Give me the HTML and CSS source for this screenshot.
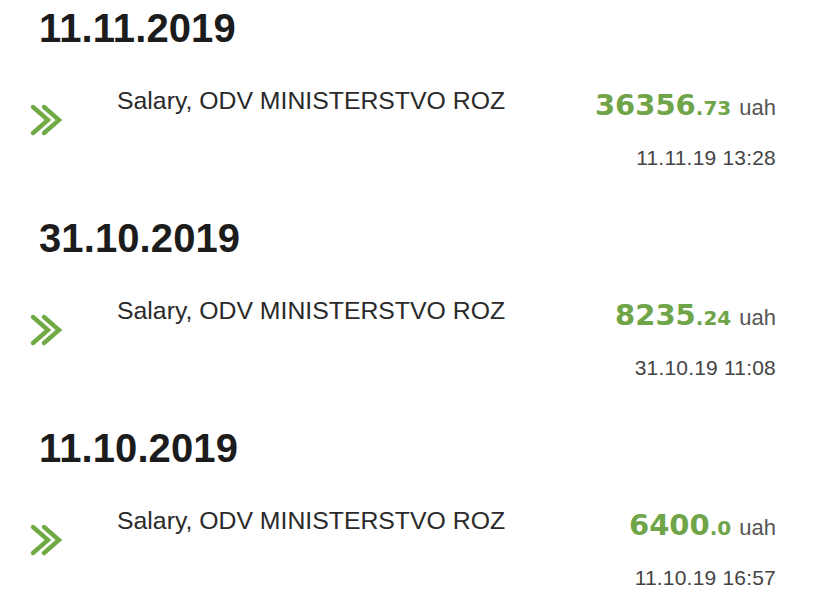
FILE: index.html
```html
<!DOCTYPE html>
<html>
<head>
<meta charset="utf-8">
<link rel="stylesheet" href="styles.css">
</head>
<body>
<div class="list">
  <section class="day">
    <h2 class="day-title">11.11.2019</h2>
    <div class="tx">
      <svg class="tx-icon" width="34" height="34" viewBox="0 0 34 34"><polyline points="4,4 19,17 4,30"/><polyline points="15,4 30,17 15,30"/></svg>
      <div class="tx-desc">Salary, ODV MINISTERSTVO ROZ</div>
      <div class="tx-side">
        <div class="tx-amount"><span class="int">36356</span><span class="frac">.73</span> <span class="cur">uah</span></div>
        <div class="tx-time">11.11.19 13:28</div>
      </div>
    </div>
  </section>
  <section class="day">
    <h2 class="day-title">31.10.2019</h2>
    <div class="tx">
      <svg class="tx-icon" width="34" height="34" viewBox="0 0 34 34"><polyline points="4,4 19,17 4,30"/><polyline points="15,4 30,17 15,30"/></svg>
      <div class="tx-desc">Salary, ODV MINISTERSTVO ROZ</div>
      <div class="tx-side">
        <div class="tx-amount"><span class="int">8235</span><span class="frac">.24</span> <span class="cur">uah</span></div>
        <div class="tx-time">31.10.19 11:08</div>
      </div>
    </div>
  </section>
  <section class="day">
    <h2 class="day-title">11.10.2019</h2>
    <div class="tx">
      <svg class="tx-icon" width="34" height="34" viewBox="0 0 34 34"><polyline points="4,4 19,17 4,30"/><polyline points="15,4 30,17 15,30"/></svg>
      <div class="tx-desc">Salary, ODV MINISTERSTVO ROZ</div>
      <div class="tx-side">
        <div class="tx-amount"><span class="int">6400</span><span class="frac">.0</span> <span class="cur">uah</span></div>
        <div class="tx-time">11.10.19 16:57</div>
      </div>
    </div>
  </section>
</div>
</body>
</html>
```
FILE: styles.css
```css
html, body {
  margin: 0;
  padding: 0;
  background: #ffffff;
}
body {
  font-family: "Liberation Sans", Arial, sans-serif;
  width: 815px;
  height: 600px;
  overflow: hidden;
}
.list {
  padding: 3px 39px 0 29px;
}
.day {
  height: 210px;
}
.day:last-child {
  height: auto;
}
.day-title {
  margin: 0 0 0 10px;
  font-size: 40px;
  line-height: 50px;
  font-weight: 700;
  color: #1c1c1c;
  letter-spacing: 0.1px;
}
.tx {
  display: flex;
  align-items: flex-start;
  margin-top: 33px;
}
.tx-icon {
  flex: none;
  margin-top: 17px;
  width: 34px;
  height: 34px;
  fill: none;
  stroke: #70aa45;
  stroke-width: 4.4;
  stroke-linecap: round;
  stroke-linejoin: miter;
}
.tx-desc {
  flex: 1;
  margin-left: 54px;
  font-size: 24.8px;
  line-height: 30px;
  color: #2a2a2a;
}
.tx-side {
  display: flex;
  flex-direction: column;
  align-items: flex-end;
}
.tx-amount {
  margin-top: 2px;
  line-height: 34px;
  font-size: 29px;
  white-space: nowrap;
}
.int {
  font-family: "DejaVu Sans", sans-serif;
  font-weight: 700;
  color: #6fa548;
}
.frac {
  font-family: "DejaVu Sans", sans-serif;
  font-weight: 700;
  font-size: 20px;
  color: #6fa548;
}
.cur {
  font-size: 22px;
  color: #555555;
}
.tx-time {
  margin-top: 21px;
  font-size: 21px;
  line-height: 24px;
  letter-spacing: 0.2px;
  color: #444444;
}
```
